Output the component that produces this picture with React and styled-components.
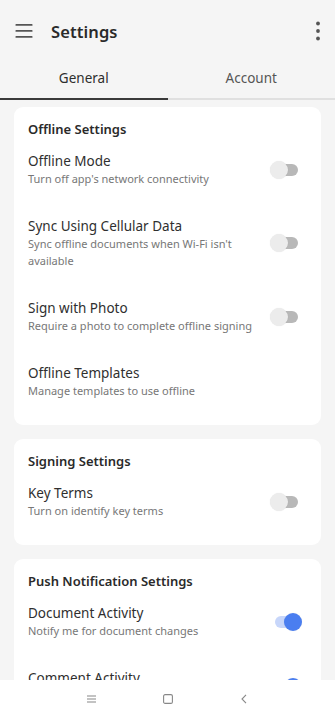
import React from "react";
import styled, { createGlobalStyle } from "styled-components";

const Global = createGlobalStyle`
  html, body { margin: 0; padding: 0; background: #f5f5f5; }
  body { font-family: "Noto Sans", "Open Sans", sans-serif; color: #2b2b2b; overflow: hidden; }
  * { box-sizing: border-box; }
`;

const Page = styled.div`
  width: 335px;
  height: 720px;
  background: #f5f5f5;
  overflow: hidden;
  position: relative;
`;

const TopBar = styled.header`
  height: 62px;
  display: flex;
  align-items: center;
  padding: 0 12px 0 14px;
`;

const Title = styled.h1`
  margin: 0 0 0 18px;
  font-size: 16.5px;
  font-weight: 600;
  color: #2a2a2a;
  flex: 1;
  letter-spacing: 0.1px;
`;

const IconBtn = styled.div`
  display: flex;
  align-items: center;
  justify-content: center;
  width: ${(p) => p.$w || 20}px;
  height: 24px;
`;

const Tabs = styled.nav`
  display: flex;
  height: 38px;
`;

const Tab = styled.div`
  flex: 1;
  display: flex;
  align-items: center;
  justify-content: center;
  font-size: 13.5px;
  color: ${(p) => (p.$active ? "#2e2e2e" : "#555")};
  border-bottom: 2px solid ${(p) => (p.$active ? "#3a3a3a" : "#e0e0e0")};
  padding-bottom: 4px;
`;

const Content = styled.main`
  display: flex;
  flex-direction: column;
  gap: 14px;
  padding: 7px 14px 60px;
`;

const Card = styled.section`
  background: #fff;
  border-radius: 9px;
  padding: 12px 21px 9px 14px;
`;

const SectionTitle = styled.h2`
  margin: 0;
  font-size: 13px;
  line-height: 20px;
  font-weight: 600;
  color: #2a2a2a;
`;

const Row = styled.div`
  display: flex;
  align-items: center;
  gap: 10px;
  padding: 13px 0 17px;
`;

const RowText = styled.div`
  flex: 1;
  min-width: 0;
  max-width: 236px;
`;

const RowTitle = styled.div`
  font-size: 13.5px;
  line-height: 18px;
  color: #2f2f2f;
`;

const RowSub = styled.div`
  font-size: 11px;
  line-height: 17px;
  color: #777;
`;

const Toggle = styled.div`
  position: relative;
  width: 30px;
  height: 18px;
  flex: none;
  margin-left: auto;
`;

const Track = styled.div`
  position: absolute;
  left: ${(p) => (p.$on ? 5 : 2)}px;
  right: ${(p) => (p.$on ? 0 : 2)}px;
  top: 3px;
  height: 12px;
  border-radius: 6px;
  background: ${(p) => (p.$on ? "#c7d6fa" : "#b8b8b8")};
`;

const Knob = styled.div`
  position: absolute;
  top: 0;
  left: ${(p) => (p.$on ? 14 : 0)}px;
  width: 18px;
  height: 18px;
  border-radius: 50%;
  background: ${(p) => (p.$on ? "#4a7ef0" : "#ececec")};
  box-shadow: 0 0 1px rgba(0, 0, 0, 0.12);
`;

const NavBar = styled.footer`
  position: absolute;
  left: 0;
  right: 0;
  bottom: 0;
  height: 40px;
  background: #fff;
  display: flex;
  justify-content: center;
  align-items: flex-start;
  padding-top: 13px;
  gap: 62px;
`;

const NavIcon = styled.div`
  width: 14px;
  height: 12px;
  display: flex;
  align-items: center;
  justify-content: center;
`;

function Switch({ on }) {
  return (
    <Toggle>
      <Track $on={on} />
      <Knob $on={on} />
    </Toggle>
  );
}

function SettingRow({ title, sub, toggle, on }) {
  return (
    <Row>
      <RowText>
        <RowTitle>{title}</RowTitle>
        <RowSub>{sub}</RowSub>
      </RowText>
      {toggle && <Switch on={on} />}
    </Row>
  );
}

export default function App() {
  return (
    <Page>
      <Global />
      <TopBar>
        <IconBtn $w={19}>
          <svg width="18" height="14" viewBox="0 0 18 14">
            <rect x="0.5" y="0" width="17" height="1.8" rx="0.6" fill="#555" />
            <rect x="0.5" y="6" width="17" height="1.8" rx="0.6" fill="#555" />
            <rect x="0.5" y="12" width="17" height="1.8" rx="0.6" fill="#555" />
          </svg>
        </IconBtn>
        <Title>Settings</Title>
        <IconBtn $w={10}>
          <svg width="6" height="20" viewBox="0 0 6 20">
            <circle cx="3" cy="2.5" r="1.9" fill="#555" />
            <circle cx="3" cy="10" r="1.9" fill="#555" />
            <circle cx="3" cy="17.5" r="1.9" fill="#555" />
          </svg>
        </IconBtn>
      </TopBar>
      <Tabs>
        <Tab $active>General</Tab>
        <Tab>Account</Tab>
      </Tabs>
      <Content>
        <Card>
          <SectionTitle>Offline Settings</SectionTitle>
          <SettingRow title="Offline Mode" sub="Turn off app's network connectivity" toggle />
          <SettingRow
            title="Sync Using Cellular Data"
            sub="Sync offline documents when Wi-Fi isn't available"
            toggle
          />
          <SettingRow title="Sign with Photo" sub="Require a photo to complete offline signing" toggle />
          <SettingRow title="Offline Templates" sub="Manage templates to use offline" />
        </Card>
        <Card>
          <SectionTitle>Signing Settings</SectionTitle>
          <SettingRow title="Key Terms" sub="Turn on identify key terms" toggle />
        </Card>
        <Card>
          <SectionTitle>Push Notification Settings</SectionTitle>
          <SettingRow title="Document Activity" sub="Notify me for document changes" toggle on />
          <SettingRow title="Comment Activity" sub="Notify me for new comments" toggle on />
        </Card>
      </Content>
      <NavBar>
        <NavIcon>
          <svg width="9" height="8" viewBox="0 0 9 8">
            <rect x="0" y="0.5" width="9" height="1" fill="#888" />
            <rect x="0" y="3.5" width="9" height="1" fill="#888" />
            <rect x="0" y="6.5" width="9" height="1" fill="#888" />
          </svg>
        </NavIcon>
        <NavIcon>
          <svg width="10" height="10" viewBox="0 0 10 10">
            <rect x="0.6" y="0.6" width="8.8" height="8.8" rx="1.5" fill="none" stroke="#888" strokeWidth="1.1" />
          </svg>
        </NavIcon>
        <NavIcon>
          <svg width="6" height="10" viewBox="0 0 6 10">
            <path d="M5 0.8 L1 5 L5 9.2" fill="none" stroke="#888" strokeWidth="1.1" />
          </svg>
        </NavIcon>
      </NavBar>
    </Page>
  );
}
